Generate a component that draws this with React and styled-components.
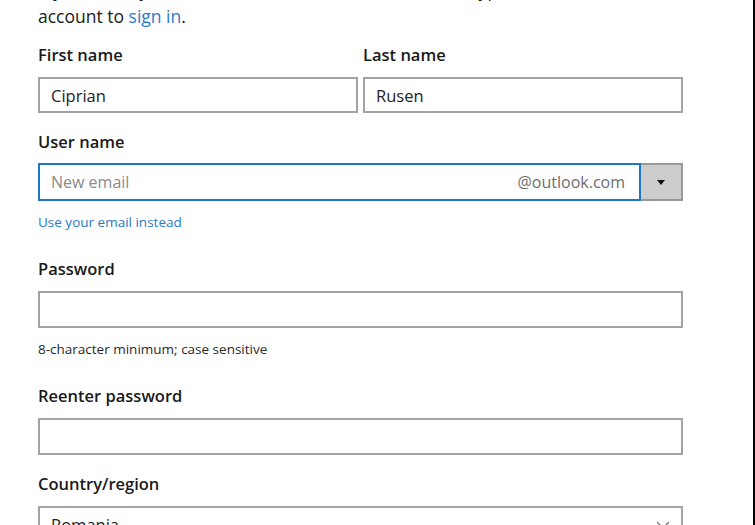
import React from "react";
import styled, { createGlobalStyle } from "styled-components";

const Global = createGlobalStyle`
  html, body {
    margin: 0;
    padding: 0;
    background: #fff;
    overflow: hidden;
  }
  body {
    font-family: "Open Sans", "Noto Sans", sans-serif;
    color: #1a1a1a;
  }
`;

export default function App() {
  return (
    <>
      <Global />
      <Window>
        <Form>
          <Intro>
            If you already use Outlook.com, Hotmail, OneDrive, Skype, Xbox Live, or Windows Phone, use that
            <br />
            account to <Link href="#">sign in</Link>.
          </Intro>

          <NameRow>
            <Field>
              <Label>First name</Label>
              <TextBox $h={36} defaultValue="Ciprian" />
            </Field>
            <Field>
              <Label>Last name</Label>
              <TextBox $h={36} defaultValue="Rusen" />
            </Field>
          </NameRow>

          <Field $top={19}>
            <Label>User name</Label>
            <EmailRow>
              <EmailBox>
                <EmailInput placeholder="New email" />
                <Domain>@outlook.com</Domain>
              </EmailBox>
              <DropButton aria-label="Choose domain">
                <svg width="8" height="5" viewBox="0 0 8 5">
                  <path d="M0 0h8L4 5z" fill="#111" />
                </svg>
              </DropButton>
            </EmailRow>
          </Field>
          <SmallLink href="#">Use your email instead</SmallLink>

          <Field $top={28}>
            <Label>Password</Label>
            <TextBox type="password" />
          </Field>
          <Hint>8-character minimum; case sensitive</Hint>

          <Field $top={29}>
            <Label>Reenter password</Label>
            <TextBox type="password" />
          </Field>

          <Field $top={19}>
            <Label>Country/region</Label>
            <SelectBox>
              <span>Romania</span>
              <svg width="14" height="8" viewBox="0 0 14 8">
                <path d="M1 1l6 6 6-6" fill="none" stroke="#777" strokeWidth="1.3" />
              </svg>
            </SelectBox>
          </Field>
        </Form>
      </Window>
    </>
  );
}

const Window = styled.div`
  width: 753px;
  height: 525px;
  border-right: 2px solid #000;
  overflow: hidden;
`;

const Form = styled.div`
  width: 645px;
  padding-left: 38px;
  display: flex;
  flex-direction: column;
`;

const Intro = styled.p`
  margin: -23px 0 0;
  font-size: 17.5px;
  line-height: 26px;
  white-space: nowrap;
  color: #1a1a1a;
`;

const Link = styled.a`
  color: #2a7ac7;
  text-decoration: none;
`;

const NameRow = styled.div`
  display: grid;
  grid-template-columns: 320px 320px;
  column-gap: 5px;
  margin-top: 16px;
`;

const Field = styled.div`
  display: flex;
  flex-direction: column;
  gap: 12px;
  margin-top: ${(p) => p.$top || 0}px;
`;

const Label = styled.label`
  font-size: 16.5px;
  line-height: 20px;
  font-weight: 600;
  color: #1a1a1a;
`;

const TextBox = styled.input`
  box-sizing: border-box;
  width: 100%;
  height: ${(p) => p.$h || 37}px;
  border: 2px solid #a3a3a3;
  padding: 0 11px;
  font-family: inherit;
  font-size: 16.5px;
  color: #222;
  outline: none;
  background: #fff;
`;

const EmailRow = styled.div`
  display: flex;
  height: 38px;
  margin-top: -1px;
`;

const EmailBox = styled.div`
  box-sizing: border-box;
  flex: 1;
  display: flex;
  align-items: center;
  border: 2px solid #1e78c8;
  padding: 0 14px 0 11px;
`;

const EmailInput = styled.input`
  flex: 1;
  border: none;
  outline: none;
  padding: 0;
  font-family: inherit;
  font-size: 16px;
  color: #222;
  &::placeholder {
    color: #8a8a8a;
  }
`;

const Domain = styled.span`
  font-size: 16px;
  color: #6e6e6e;
`;

const DropButton = styled.button`
  box-sizing: border-box;
  width: 42px;
  border: 2px solid #999;
  border-left: none;
  background: #cccccc;
  display: flex;
  align-items: center;
  justify-content: center;
  padding: 0;
`;

const SmallLink = styled.a`
  margin-top: 12px;
  font-size: 13.5px;
  line-height: 18px;
  color: #2a7ac7;
  text-decoration: none;
  align-self: flex-start;
`;

const Hint = styled.div`
  margin-top: 13px;
  font-size: 13.5px;
  line-height: 16px;
  color: #2a2a2a;
`;

const SelectBox = styled.div`
  box-sizing: border-box;
  height: 37px;
  border: 2px solid #a3a3a3;
  padding: 0 11px;
  display: flex;
  align-items: center;
  justify-content: space-between;
  font-size: 16.5px;
  color: #222;
`;
